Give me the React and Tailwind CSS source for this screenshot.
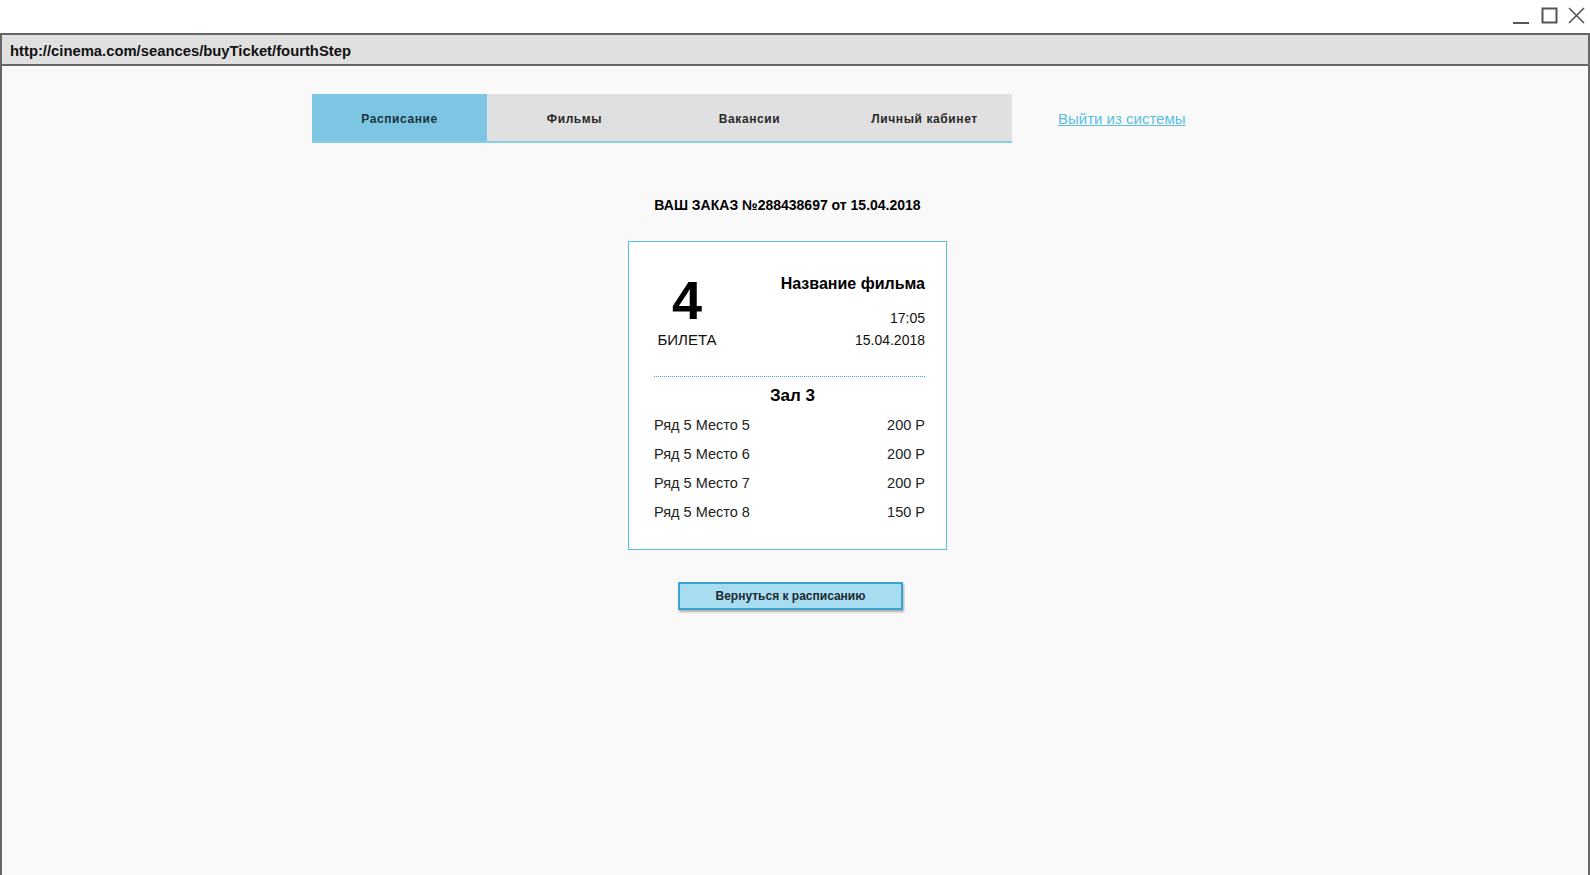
const TABS = [
  { label: "Расписание", active: true },
  { label: "Фильмы" },
  { label: "Вакансии" },
  { label: "Личный кабинет" },
];

const SEATS = [
  { row: 5, seat: 5, price: 200 },
  { row: 5, seat: 6, price: 200 },
  { row: 5, seat: 7, price: 200 },
  { row: 5, seat: 8, price: 150 },
];

function WindowButtons() {
  return (
    <div className="flex justify-end items-start pt-[7px] pr-[5px]">
      <svg width="16" height="17" viewBox="0 0 16 17" className="mr-[12px]">
        <line x1="0" y1="16" x2="16" y2="16" stroke="#555" strokeWidth="2" />
      </svg>
      <svg width="17" height="17" viewBox="0 0 17 17" className="mr-[10px]">
        <rect x="1.5" y="1.5" width="14" height="14" fill="none" stroke="#555" strokeWidth="2" />
      </svg>
      <svg width="17" height="17" viewBox="0 0 17 17">
        <path d="M1 1 L16 16 M16 1 L1 16" stroke="#555" strokeWidth="1.6" fill="none" />
      </svg>
    </div>
  );
}

function NavBar() {
  return (
    <div className="flex items-center pl-[310px]">
      <ul className="flex border-b-2 border-[#86cde6]">
        {TABS.map((tab) => (
          <li
            key={tab.label}
            className={`w-[175px] h-[47px] pt-[2px] flex items-center justify-center text-[12px] font-bold tracking-[0.6px] ${
              tab.active ? "bg-[#7cc6e4] text-[#1d3340]" : "bg-[#e0e0e0] text-[#2a2a2a]"
            }`}
          >
            {tab.label}
          </li>
        ))}
      </ul>
      <a href="#" className="ml-[46px] mt-[2px] text-[15px] text-[#5bc0de] underline">
        Выйти из системы
      </a>
    </div>
  );
}

function TicketCard() {
  return (
    <div className="w-[319px] bg-white border border-[#5bc0de] pt-[30px] pb-[26px] pl-[25px] pr-[21px] text-[#111]">
      <div className="flex justify-between items-start">
        <div className="w-[66px] flex flex-col items-center">
          <span className="text-[54px] leading-[57px] font-bold text-black">4</span>
          <span className="mt-[1px] text-[15px] leading-5">БИЛЕТА</span>
        </div>
        <div className="mt-[1px] flex flex-col items-end">
          <span className="text-[16px] leading-[22px] font-bold text-black">Название фильма</span>
          <span className="mt-[12px] text-[14px] leading-[22px]">17:05</span>
          <span className="text-[14px] leading-[22px]">15.04.2018</span>
        </div>
      </div>
      <div className="mt-[25px] border-t border-dotted border-[#2fb0dd]" />
      <h3 className="mt-[8px] pl-[6px] text-center text-[17px] leading-[22px] font-bold text-black">Зал 3</h3>
      <ul className="mt-[7px] flex flex-col gap-[7px]">
        {SEATS.map((s) => (
          <li key={s.seat} className="flex justify-between text-[14.5px] leading-[22px] text-[#222]">
            <span>
              Ряд {s.row} Место {s.seat}
            </span>
            <span>{s.price} Р</span>
          </li>
        ))}
      </ul>
    </div>
  );
}

export default function App() {
  return (
    <div className="w-[1590px] h-[875px] flex flex-col bg-white font-['Liberation_Sans',Arial,sans-serif] overflow-hidden">
      <div className="h-[33px]">
        <WindowButtons />
      </div>
      <div className="flex-1 flex flex-col border-x-2 border-t-2 border-[#666]">
        <div className="h-[31px] flex items-center pl-[8px] pt-[3px] bg-[#e0e0e0] border-b-2 border-[#666] text-[14.8px] font-bold text-[#111]">
          http://cinema.com/seances/buyTicket/fourthStep
        </div>
        <div className="flex-1 bg-[#f9f9f9] pt-[28px]">
          <NavBar />
          <div className="ml-[626px] w-[319px] flex flex-col">
            <h2 className="mt-[52px] text-center text-[14px] leading-5 font-bold text-black">
              ВАШ ЗАКАЗ №288438697 от 15.04.2018
            </h2>
            <div className="mt-[26px]">
              <TicketCard />
            </div>
            <button className="mt-[32px] ml-[50px] w-[225px] h-[28px] bg-[#a8ddf1] border-2 border-[#3ba3cf] shadow-[1px_2px_2px_rgba(0,0,0,0.3)] text-[12px] font-bold text-[#1b2b33]">
              Вернуться к расписанию
            </button>
          </div>
        </div>
      </div>
    </div>
  );
}
